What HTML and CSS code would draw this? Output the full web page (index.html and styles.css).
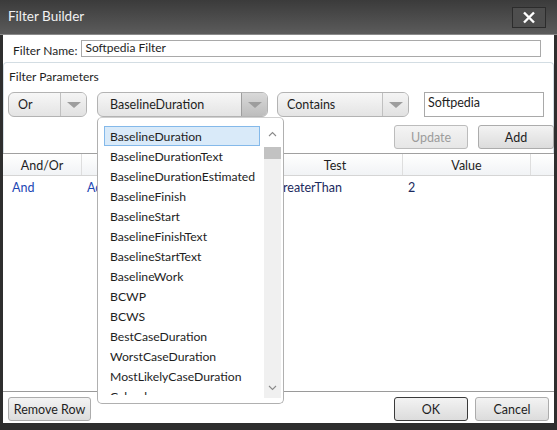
FILE: index.html
```html
<!DOCTYPE html>
<html>
<head>
<meta charset="utf-8">
<link rel="stylesheet" href="styles.css">
</head>
<body>
<div class="window">
  <div class="titlebar">
    <span class="title">Filter Builder</span>
    <span class="close"><svg width="14" height="13" viewBox="0 0 14 13"><path d="M2 1.5 L12 11.5 M12 1.5 L2 11.5" stroke="#fff" stroke-width="2.4" fill="none"/></svg></span>
  </div>
  <div class="client">
    <div class="namerow">
      <span class="namelabel">Filter Name:</span>
      <div class="textbox namebox">Softpedia Filter</div>
    </div>
    <div class="group">
      <div class="grouplabel">Filter Parameters</div>
      <div class="comborow">
        <div class="combo c-or"><span class="ctext">Or</span><span class="carrow"><span class="tri"></span></span></div>
        <div class="combo c-field open"><span class="ctext">BaselineDuration</span><span class="carrow"><span class="tri"></span></span></div>
        <div class="combo c-test"><span class="ctext">Contains</span><span class="carrow"><span class="tri"></span></span></div>
        <div class="textbox valbox">Softpedia</div>
      </div>
      <div class="btnrow">
        <div class="btn disabled b-update">Update</div>
        <div class="btn b-add">Add</div>
      </div>
    </div>
    <div class="grid">
      <div class="ghead">
        <div class="gc c1">And/Or</div>
        <div class="gc c2"></div>
        <div class="gc c3">Test</div>
        <div class="gc c4">Value</div>
        <div class="gc c5"></div>
      </div>
      <div class="grow">
        <div class="gd c1 blue">And</div>
        <div class="gd c2 blue">Ad</div>
        <div class="gd c3"><span class="cut">reaterThan</span></div>
        <div class="gd c4">2</div>
        <div class="gd c5"></div>
      </div>
    </div>
    <div class="bottomrow">
      <div class="btn b-remove">Remove Row</div>
      <div class="spacer"></div>
      <div class="btn default b-ok">OK</div>
      <div class="btn b-cancel">Cancel</div>
    </div>
    <div class="popup">
      <div class="list">
        <div class="item sel">BaselineDuration</div>
        <div class="item">BaselineDurationText</div>
        <div class="item">BaselineDurationEstimated</div>
        <div class="item">BaselineFinish</div>
        <div class="item">BaselineStart</div>
        <div class="item">BaselineFinishText</div>
        <div class="item">BaselineStartText</div>
        <div class="item">BaselineWork</div>
        <div class="item">BCWP</div>
        <div class="item">BCWS</div>
        <div class="item">BestCaseDuration</div>
        <div class="item">WorstCaseDuration</div>
        <div class="item">MostLikelyCaseDuration</div>
        <div class="item last">Calendar</div>
      </div>
      <div class="scroll">
        <div class="sarrow up"><svg width="9" height="6" viewBox="0 0 9 6"><path d="M1 5 L4.5 1.5 L8 5" stroke="#8a8a8a" stroke-width="1.1" fill="none"/></svg></div>
        <div class="strack"><div class="thumb"></div></div>
        <div class="sarrow down"><svg width="9" height="6" viewBox="0 0 9 6"><path d="M1 1 L4.5 4.5 L8 1" stroke="#8a8a8a" stroke-width="1.1" fill="none"/></svg></div>
      </div>
    </div>
  </div>
</div>
</body>
</html>
```
FILE: styles.css
```css
* { box-sizing: border-box; }
html, body { margin: 0; padding: 0; }
body {
  width: 557px; height: 430px; overflow: hidden;
  font-family: "Lato", "Open Sans", sans-serif;
  font-size: 12px;
  color: #1e1e1e;
}
.window {
  width: 557px; height: 430px;
  background: #2e2e2e;
  display: flex; flex-direction: column;
}
.titlebar {
  height: 35px;
  background: linear-gradient(#3b3b3b, #5b5b5b);
  display: flex; align-items: center;
  padding: 0 10px 2px 8px;
  border-bottom: 1px solid #8a8a8a;
}
.title { color: #f2f2f2; font-size: 13.5px; flex: 1; }
.close {
  width: 34px; height: 21px; margin-right: 1px; margin-top: 2px;
  border: 1px solid #2c2c2c;
  background: #4e4e4e;
  display: flex; align-items: center; justify-content: center;
}
.client {
  position: relative;
  flex: 1;
  margin: 0 3px 7px 3px;
  background: #fff;
  display: flex; flex-direction: column;
}
.namerow { display: flex; align-items: center; height: 24px; padding: 3px 0 0 10px; }
.namelabel { margin-right: 4px; margin-top: 4px; }
.textbox {
  border: 1px solid #a9a9a9; background: #fff;
  padding: 0 3px; line-height: 14px;
}
.namebox { width: 460px; height: 17px; }
.group {
  margin-top: 3px;
  border: 1px solid #d3dde3; border-bottom: none;
  border-radius: 4px 4px 0 0;
  padding: 0 0 0 4px;
  height: 91px;
}
.grouplabel { padding: 6px 0 0 1px; height: 29px; }
.comborow { display: flex; align-items: flex-start; height: 33px; }
.combo {
  height: 25px;
  border: 1px solid #b3b3b3; border-radius: 6px;
  background: linear-gradient(#f7f7f7, #e4e4e4);
  display: flex; align-items: stretch;
  overflow: hidden;
}
.ctext { flex: 1; display: flex; align-items: center; padding-left: 9px; font-size: 12.5px; }
.carrow {
  width: 26px; border-left: 1px solid #c0c0c0;
  display: flex; align-items: center; justify-content: center;
  background: linear-gradient(#f4f4f4, #e1e1e1);
}
.open .carrow { background: linear-gradient(#d9d9d9, #bdbdbd); border-left-color: #9e9e9e; }
.tri {
  width: 0; height: 0;
  border-left: 7px solid transparent; border-right: 7px solid transparent;
  border-top: 6px solid #9d9d9d;
}
.c-or { width: 79px; }
.c-field { width: 171px; margin-left: 10px; }
.c-field .ctext { padding-left: 12px; }
.c-test { width: 132px; margin-left: 9px; }
.valbox { width: 120px; height: 25px; margin-left: 15px; padding-top: 2px; line-height: 16px; font-size: 12.5px; }
.btnrow { display: flex; justify-content: flex-end; gap: 10px; padding-right: 0; }
.btn {
  height: 24px; border: 1px solid #acacac; border-radius: 3px;
  background: linear-gradient(#f3f3f3, #dcdcdc);
  display: flex; align-items: center; justify-content: center;
  font-size: 12.5px; color: #1e1e1e;
}
.btn.disabled { color: #9c9c9c; border-color: #bcbcbc; background: linear-gradient(#f4f4f4, #e6e6e6); }
.b-update { width: 74px; }
.b-add { width: 76px; margin-right: -1px; }
.grid {
  height: 239px;
  border-top: 1px solid #a0a0a0;
  border-bottom: 1px solid #9a9a9a;
  display: flex; flex-direction: column;
}
.ghead {
  display: flex; height: 22px;
  background: linear-gradient(#ffffff, #f1f3f5);
  border-bottom: 1px solid #d5d5d5;
}
.gc { border-right: 1px solid #dedede; display: flex; align-items: center; justify-content: center; font-size: 12.5px; padding-top: 2px; }
.c1 { width: 79px; }
.c2 { width: 186px; }
.c3 { width: 135px; }
.c4 { width: 128px; }
.c5 { flex: 1; border-right: none; }
.grow { display: flex; height: 22px; }
.gd { padding-left: 5px; display: flex; align-items: center; color: #1b2a5e; font-size: 12.5px; padding-top: 1px; }
.gd.c1 { padding-left: 9px; }
.gd.c3 { padding-left: 15px; }
.gd.blue { color: #1c47b4; }
.bottomrow { display: flex; align-items: center; padding: 5px 5px 0 5px; gap: 7px; }
.spacer { flex: 1; }
.b-remove { width: 83px; }
.b-ok { width: 74px; border-color: #3a3a3a; }
.b-cancel { width: 74px; }
.popup {
  position: absolute; left: 94px; top: 82px;
  width: 187px; height: 287px;
  background: #fff;
  border: 1px solid #b0b0b0; border-top-color: #d0d0d0;
  border-radius: 5px;
  display: flex; padding: 2px 2px 5px 6px;
  z-index: 2;
}
.list { flex: 1; overflow: hidden; padding-top: 6px; }
.item { height: 20px; line-height: 19px; padding-left: 5px; font-size: 12.2px; white-space: nowrap; border: 1px solid transparent; }
.item.last { height: 10px; overflow: hidden; }
.item.sel { background: #d9eaf9; border-color: #84b9ea; width: 156px; }
.scroll { width: 17px; display: flex; flex-direction: column; margin-left: 3px; }
.sarrow { height: 27px; display: flex; align-items: center; justify-content: center; }
.sarrow.down { height: 20px; background: #f0f0f0; }
.strack { flex: 1; background: #f0f0f0; }
.thumb { height: 12px; background: #c2c2c2; }
```
